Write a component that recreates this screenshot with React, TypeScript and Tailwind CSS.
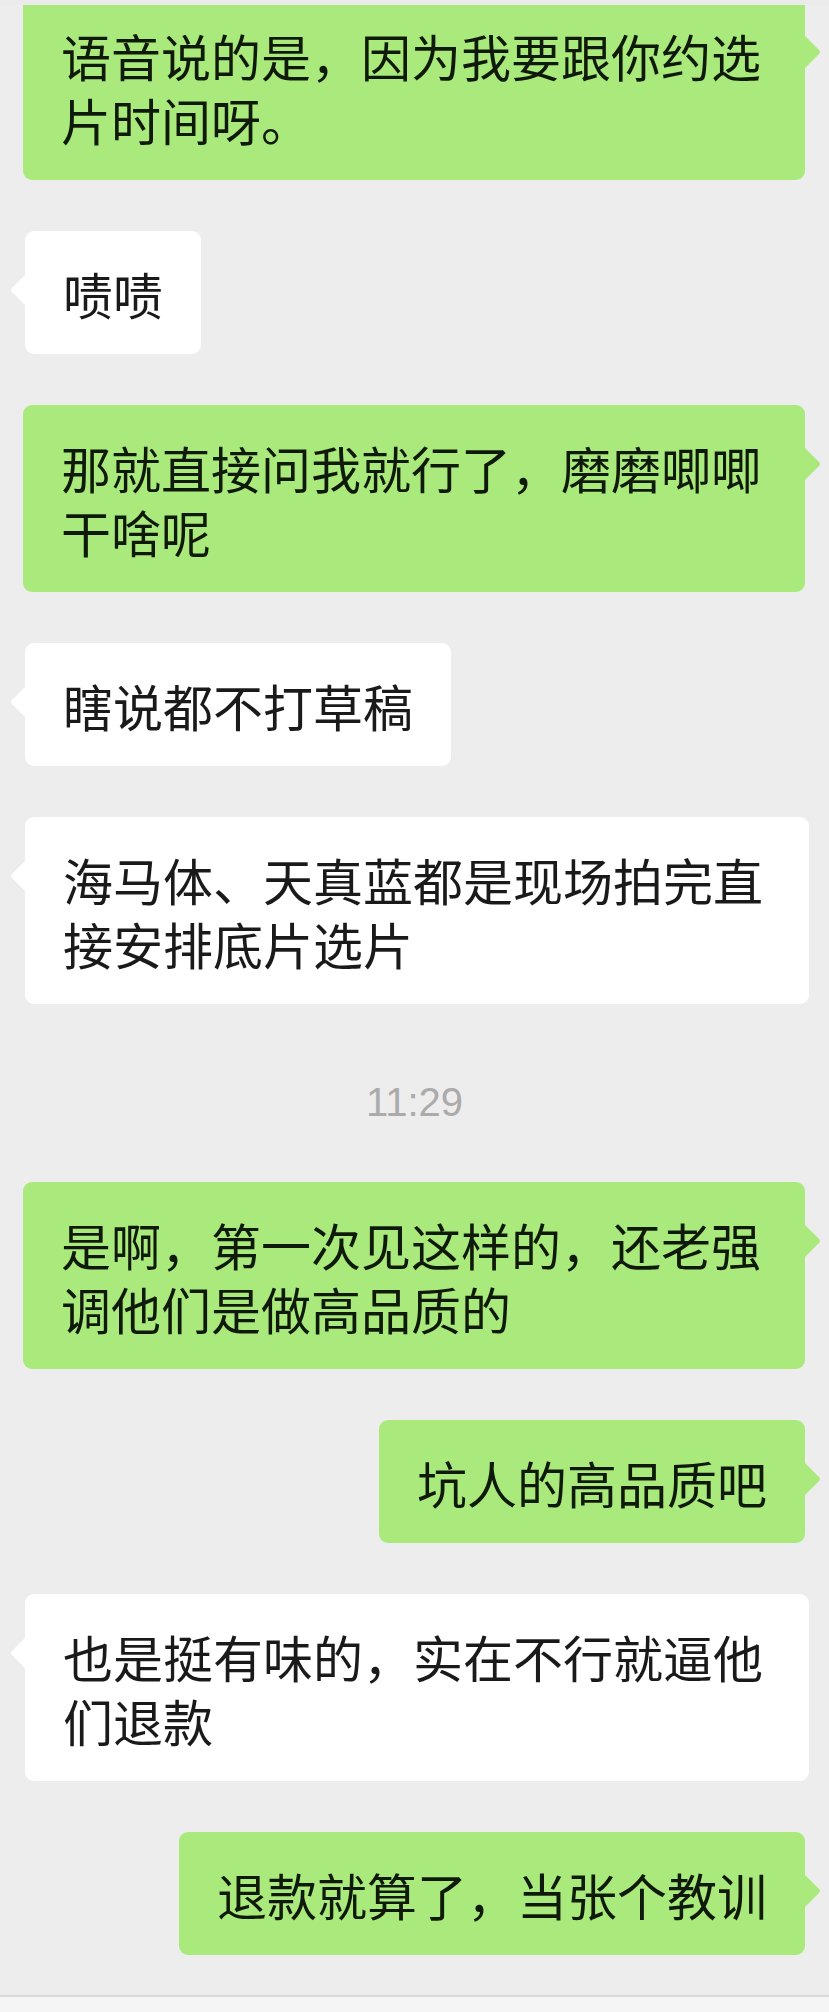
const font = "font-['Noto_Sans_CJK_SC','Noto_Sans',sans-serif]"

type Msg = { side: "me" | "them" | "time"; text: string }

const messages: Msg[] = [
	{ side: "me", text: "语音说的是，因为我要跟你约选片时间呀。" },
	{ side: "them", text: "啧啧" },
	{ side: "me", text: "那就直接问我就行了，磨磨唧唧干啥呢" },
	{ side: "them", text: "瞎说都不打草稿" },
	{ side: "them", text: "海马体、天真蓝都是现场拍完直接安排底片选片" },
	{ side: "time", text: "11:29" },
	{ side: "me", text: "是啊，第一次见这样的，还老强调他们是做高品质的" },
	{ side: "me", text: "坑人的高品质吧" },
	{ side: "them", text: "也是挺有味的，实在不行就逼他们退款" },
	{ side: "me", text: "退款就算了，当张个教训" },
]

function Tail({ side }: { side: "me" | "them" }) {
	if (side === "them") {
		return (
			<svg
				className="absolute left-[-15px] top-[42px]"
				width="17"
				height="34"
				viewBox="0 0 17 34"
			>
				<path d="M17 0 L2 15 Q0 17 2 19 L17 34 Z" fill="#ffffff" />
			</svg>
		)
	}
	return (
		<svg
			className="absolute right-[-16px] top-[42px]"
			width="17"
			height="34"
			viewBox="0 0 17 34"
		>
			<path d="M0 0 L15 15 Q17 17 15 19 L0 34 Z" fill="#aaea7c" />
		</svg>
	)
}

function Bubble({ msg, first }: { msg: Msg; first?: boolean }) {
	if (msg.side === "time") {
		return (
			<div className="mt-[27px] mb-[9px] flex justify-center">
				<span className="text-[40px] leading-[40px] text-[#ababab] font-['Liberation_Sans',sans-serif]">
					{msg.text}
				</span>
			</div>
		)
	}
	const isMe = msg.side === "me"
	return (
		<div
			className={`flex ${isMe ? "justify-end pl-[23px] pr-[24px]" : "justify-start pl-[25px] pr-[20px]"} ${
				first ? "mt-[-12px]" : ""
			}`}
		>
			<div
				className={`relative rounded-[9px] pl-[38px] pr-[38px] pt-[30px] pb-[29px] text-[50px] leading-[64px] ${
					isMe ? "bg-[#aaea7c] text-[#0f1a0a]" : "bg-white text-[#1a1a1a]"
				}`}
			>
				{msg.text}
				<Tail side={msg.side as "me" | "them"} />
			</div>
		</div>
	)
}

export default function App() {
	return (
		<div className={`w-[829px] h-[2012px] bg-[#ededed] flex flex-col overflow-hidden ${font}`}>
			<div className="h-[5px] shrink-0 bg-[#ebebeb]" />
			<div className="flex-1 min-h-0 overflow-hidden flex flex-col gap-[51px]">
				{messages.map((m, i) => (
					<Bubble key={i} msg={m} first={i === 0} />
				))}
			</div>
			{/* input bar edge */}
			<div className="h-[17px] shrink-0 bg-[#f5f5f5] border-t-2 border-[#d9d9d9]" />
		</div>
	)
}
